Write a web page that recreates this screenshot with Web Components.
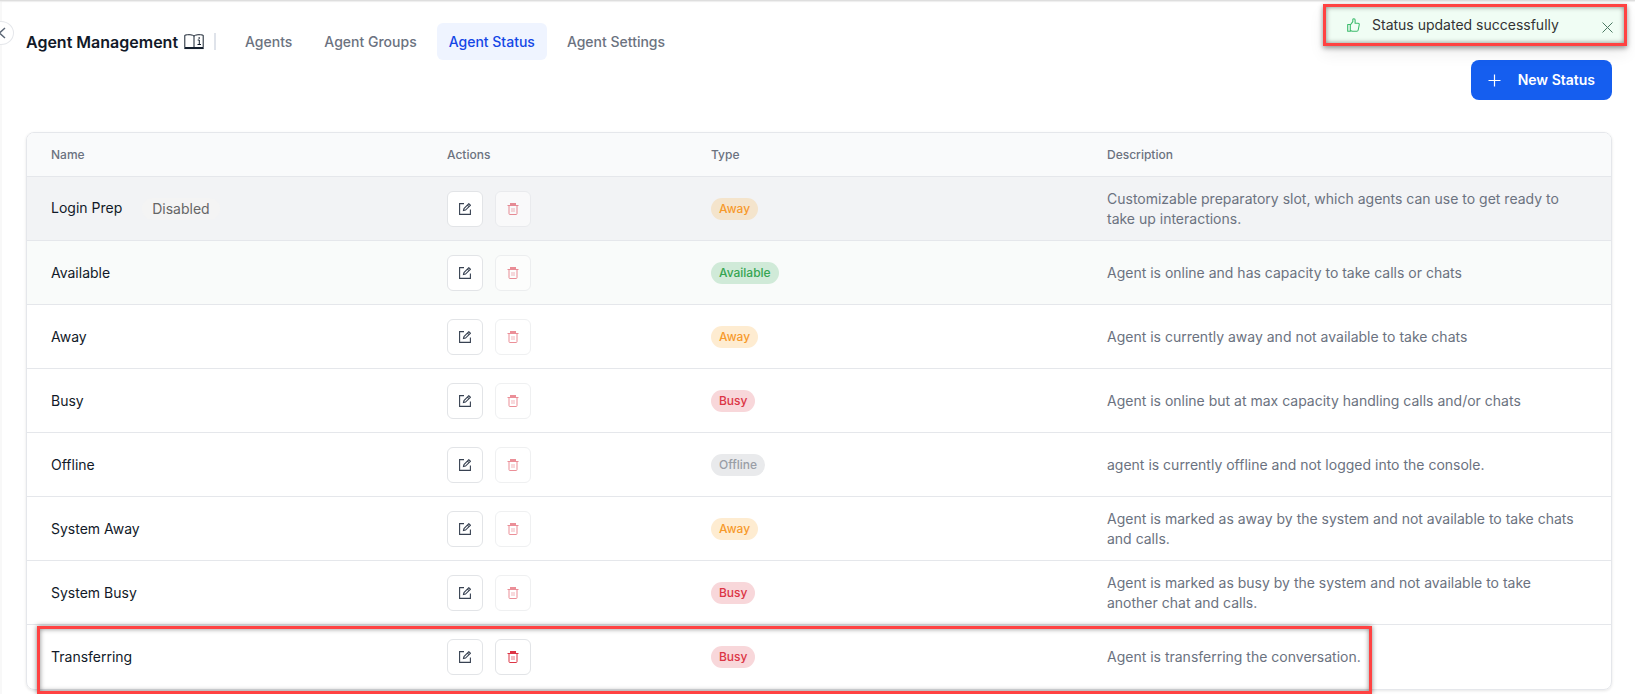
<!DOCTYPE html>
<html lang="en">
<head>
<meta charset="utf-8">
<title>Agent Management</title>
<style>
  html { background: #fff; }
  body { margin: 0; font-family: Inter, "Liberation Sans", sans-serif; font-size: 14px; line-height: 20px; color: #111928; }
</style>
</head>
<body>
<agent-page>
  <page-header slot="header" heading="Agent Management">
    <tab-link>Agents</tab-link>
    <tab-link>Agent Groups</tab-link>
    <tab-link active>Agent Status</tab-link>
    <tab-link>Agent Settings</tab-link>
  </page-header>
  <primary-button slot="toolbar">New Status</primary-button>
  <status-table></status-table>
  <toast-message slot="toast">Status updated successfully</toast-message>
</agent-page>

<script>
const define = (name, html, setup) => {
  const template = document.createElement('template');
  template.innerHTML = html;
  customElements.define(name, class extends HTMLElement {
    constructor() {
      super();
      this.attachShadow({ mode: 'open' }).append(template.content.cloneNode(true));
    }
    connectedCallback() { if (setup) setup(this, this.shadowRoot); }
  });
};

define('agent-page', `
  <style>
    :host { display: block; position: relative; min-height: 100vh; box-sizing: border-box; border-left: 2px solid #f8f8f8; }
    .topline { position: absolute; top: 0; left: -2px; right: 0; height: 1px; background: #dedede; box-shadow: 0 1px 1px #ececec; }
    .back { position: absolute; left: -14px; top: 21px; width: 26px; height: 24px; padding: 0; border: 1px solid #e5e7eb; border-radius: 50%; background: #fff; }
    .back svg { position: absolute; left: 7px; top: 5px; }
    main { padding: 23px 23px 4px 24px; }
    .toolbar { display: flex; justify-content: flex-end; margin-bottom: 32px; }
  </style>
  <div class="topline"></div>
  <button class="back" aria-label="Collapse">
    <svg width="12" height="12" viewBox="0 0 12 12" fill="none" stroke="#5b6675" stroke-width="1.4"><path d="M9 1 3.5 6 9 11"/></svg>
  </button>
  <main>
    <slot name="header"></slot>
    <div class="toolbar"><slot name="toolbar"></slot></div>
    <slot></slot>
  </main>
  <slot name="toast"></slot>`);

define('page-header', `
  <style>
    :host { display: flex; align-items: center; }
    h1 { margin: 0 6px 0 0; font-size: 16px; line-height: 24px; font-weight: 600; }
    .guide { display: flex; }
    .divider { width: 2px; height: 17px; margin: 0 17px 0 10px; background: #dfe3ea; }
    nav { display: flex; gap: 8px; }
  </style>
  <h1></h1>
  <a class="guide" href="#guide" aria-label="Guide">
    <svg width="20" height="16" viewBox="0 0 20 16" fill="none">
      <path d="M10 2C8.500.6 4 .3 .8 1.200V13.500H19.200V1.200C16 .3 11.500.6 10 2V13.500" fill="#fff" stroke="#15202e"/>
      <path d="M.3 14.300H19.700" stroke="#15202e" stroke-width="1.500"/>
      <path d="M13.700 6H15.300V10.500M13.500 10.500H17" stroke="#15202e"/>
      <rect x="14.500" y="3.300" width="1.400" height="1.400" fill="#15202e"/>
    </svg>
  </a>
  <span class="divider"></span>
  <nav><slot></slot></nav>`,
  (host, root) => { root.querySelector('h1').textContent = host.getAttribute('heading'); });

define('tab-link', `
  <style>
    :host { display: block; }
    a { display: block; padding: 8px 12px; border-radius: 6px; line-height: 21px; font-weight: 500; color: #6b7280; text-decoration: none; }
    :host([active]) a { background: #eff4ff; color: #1447e6; }
  </style>
  <a href="#"><slot></slot></a>`);

define('primary-button', `
  <style>
    :host { display: block; }
    button { display: flex; align-items: center; gap: 17px; height: 40px; padding: 0 17px; border: 0; border-radius: 8px; background: #155eef; color: #fff; font: 600 14px/20px Inter, sans-serif; }
  </style>
  <button><svg width="13" height="13" viewBox="0 0 13 13" stroke="#fff" stroke-width="1.200"><path d="M6.500.5V12.500M.5 6.500H12.500"/></svg><span><slot></slot></span></button>`);

define('toast-message', `
  <style>
    :host { position: absolute; top: 4px; right: 8px; display: flex; align-items: center; box-sizing: border-box; width: 304px; height: 42px; padding: 0 11px 0 21px; border: 3px solid #ff4242; background: #f0fdf4; color: #333; box-shadow: 0 2px 5px #0006, inset 0 0 5px #0007, 0 8px 16px #0001; }
    span { flex: 1; margin-left: 12px; }
    button { display: flex; padding: 4px 0 0; border: 0; background: none; }
  </style>
  <svg width="13" height="14" viewBox="0 0 13 14" fill="none" stroke="#3cbb6c" stroke-width="1.100" stroke-linejoin="round"><path d="M.7 6.500H3.300V13.300H.7ZM3.300 7 5.800 3.700V1.800C5.800.4 8.100.4 8.100 2V5.300H11C12.200 5.300 12.400 6 12.200 7L11.200 12C11 12.900 10.600 13.300 9.800 13.300H5.300L3.300 12.500"/></svg>
  <span role="status"><slot></slot></span>
  <button aria-label="Close"><svg width="11" height="11" viewBox="0 0 11 11" stroke="#4c7a63" stroke-width="1"><path d="M.5.5 10.500 10.500M10.500.5.5 10.500"/></svg></button>`);

define('status-badge', `
  <style>
    :host { display: inline-block; vertical-align: middle; padding: 1px 8px; border-radius: 11px; font-size: 12px; line-height: 20px; font-weight: 500; }
    :host([kind="Away"]) { background: #feecd1; color: #f79a2c; }
    :host([kind="Away"][muted]) { background: #f4e4cc; }
    :host([kind="Available"]) { background: #d0ead8; color: #35a552; }
    :host([kind="Busy"]) { background: #f8d7da; color: #dc3545; }
    :host([kind="Offline"]) { background: #e9eaec; color: #9a9ea6; }
    :host([kind="Disabled"]) { margin-left: 20px; padding: 1px 10px; font-size: 14px; font-weight: 400; background: #f4f4f4; color: #666; }
  </style>
  <slot></slot>`);

define('icon-button', `
  <style>
    :host { display: block; }
    button { display: flex; align-items: center; justify-content: center; box-sizing: border-box; width: 36px; height: 36px; padding: 0; border: 1px solid #e2e4e7; border-radius: 6px; background: #fff; }
    button:disabled { opacity: .55; }
    svg { display: none; }
    :host([icon="edit"]) .edit, :host([icon="delete"]) .delete { display: block; }
  </style>
  <button>
    <svg class="edit" width="12" height="12" viewBox="0 0 12 12" fill="none" stroke="#374151" stroke-width="1.100"><path d="M5 .6H.6V11.400H11.400V6.500"/><path d="M4.500 7.500 5 5.500 9.800.7 11.400 2.300 6.500 7.100ZM8.400 2.100 10 3.700"/></svg>
    <svg class="delete" width="12" height="12" viewBox="0 0 12 12"><path d="M3 0H9V2H3Z" fill="#dc3545"/><path d="M.5 2.500H11.500" stroke="#dc3545"/><path d="M2 3V10.700Q2 11.500 2.800 11.500H9.200Q10 11.500 10 10.700V3" fill="none" stroke="#dc3545"/><path d="M5 5V9M7 5V9" stroke="#dc3545" stroke-opacity=".5" stroke-width="1.300"/></svg>
  </button>`,
  (host, root) => {
    const button = root.querySelector('button');
    button.setAttribute('aria-label', host.getAttribute('icon'));
    button.disabled = host.hasAttribute('disabled');
  });

const statuses = [
  ['Login Prep', 'Away', 'Customizable preparatory slot, which agents can use to get ready to take up interactions.', 'off'],
  ['Available', 'Available', 'Agent is online and has capacity to take calls or chats', 'hover'],
  ['Away', 'Away', 'Agent is currently away and not available to take chats'],
  ['Busy', 'Busy', 'Agent is online but at max capacity handling calls and/or chats'],
  ['Offline', 'Offline', 'agent is currently offline and not logged into the console.'],
  ['System Away', 'Away', 'Agent is marked as away by the system and not available to take chats and calls.'],
  ['System Busy', 'Busy', 'Agent is marked as busy by the system and not available to take another chat and calls.'],
  ['Transferring', 'Busy', 'Agent is transferring the conversation.', 'marked'],
];

define('status-table', `
  <style>
    :host { display: block; border: 1px solid #e5e7eb; border-radius: 8px; box-shadow: 0 1px 3px #0000001a; }
    table { width: 100%; border-collapse: separate; border-spacing: 0; table-layout: fixed; }
    th, td { box-sizing: border-box; padding: 1px 24px 0; text-align: left; border-bottom: 1px solid #e5e7eb; }
    th { height: 44px; background: #f9fafb; font-size: 12px; line-height: 18px; font-weight: 500; color: #6b7280; }
    th:first-child { border-top-left-radius: 7px; }
    th:last-child { border-top-right-radius: 7px; }
    td { height: 64px; }
    .marked td { padding-top: 0; border-bottom: 0; }
    td:last-child { padding-right: 32px; color: #6b7280; }
    .off { background: #f2f3f5; }
    .hover { background: #f9fbfa; }
    .actions { display: flex; gap: 12px; }
    .marked { position: relative; }
    .frame { position: absolute; left: 10px; right: 239px; top: 1px; bottom: -5px; box-sizing: border-box; border: 3px solid #ff4242; box-shadow: 0 0 5px #0007, inset 0 0 5px #0007; pointer-events: none; }
  </style>
  <table>
    <colgroup><col style="width:25%"><col style="width:calc(100% / 6)"><col style="width:25%"><col></colgroup>
    <thead><tr><th>Name</th><th>Actions</th><th>Type</th><th>Description</th></tr></thead>
    <tbody></tbody>
  </table>`,
  (host, root) => {
    root.querySelector('tbody').innerHTML = statuses.map(([name, type, text, state = '']) => `
      <tr class="${state}">
        <td>${name}${state === 'off' ? '<status-badge kind="Disabled">Disabled</status-badge>' : ''}${state === 'marked' ? '<div class="frame"></div>' : ''}</td>
        <td><div class="actions"><icon-button icon="edit"></icon-button><icon-button icon="delete" ${state === 'marked' ? '' : 'disabled'}></icon-button></div></td>
        <td><status-badge kind="${type}" ${state === 'off' ? 'muted' : ''}>${type}</status-badge></td>
        <td>${text}</td>
      </tr>`).join('');
  });
</script>
</body>
</html>
